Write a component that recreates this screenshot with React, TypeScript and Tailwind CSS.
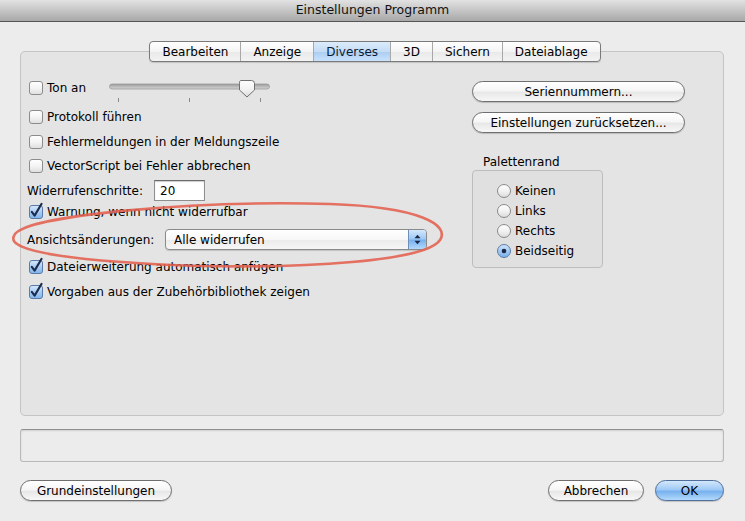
import type { ReactNode } from 'react'

function CheckBox({ checked = false }: { checked?: boolean }) {
  return (
    <svg width="14" height="14" viewBox="0 0 14 14" className="shrink-0 overflow-visible">
      <defs>
        <linearGradient id="cbOff" x1="0" y1="0" x2="0" y2="1">
          <stop offset="0" stopColor="#ffffff" />
          <stop offset="0.5" stopColor="#f4f4f4" />
          <stop offset="1" stopColor="#dedede" />
        </linearGradient>
        <linearGradient id="cbOn" x1="0" y1="0" x2="0" y2="1">
          <stop offset="0" stopColor="#d6e8fb" />
          <stop offset="0.5" stopColor="#a9cdf4" />
          <stop offset="1" stopColor="#7fb4ec" />
        </linearGradient>
      </defs>
      <rect x="0.5" y="0.5" width="13" height="13" rx="2.5" fill={checked ? 'url(#cbOn)' : 'url(#cbOff)'} stroke={checked ? '#5b7ba6' : '#8c8c8c'} />
      {checked && (
        <path d="M2.8 6.8 L5.6 10.6 L12.6 -1.2" fill="none" stroke="#1b2b4d" strokeWidth="2.1" strokeLinecap="round" strokeLinejoin="round" />
      )}
    </svg>
  )
}

function Radio({ checked = false }: { checked?: boolean }) {
  return (
    <svg width="14" height="14" viewBox="0 0 14 14" className="shrink-0">
      <defs>
        <linearGradient id="rbOff" x1="0" y1="0" x2="0" y2="1">
          <stop offset="0" stopColor="#ffffff" />
          <stop offset="0.5" stopColor="#f2f2f2" />
          <stop offset="1" stopColor="#dadada" />
        </linearGradient>
        <linearGradient id="rbOn" x1="0" y1="0" x2="0" y2="1">
          <stop offset="0" stopColor="#d4e7fb" />
          <stop offset="0.5" stopColor="#a3c9f3" />
          <stop offset="1" stopColor="#77aeea" />
        </linearGradient>
      </defs>
      <circle cx="7" cy="7" r="6.5" fill={checked ? 'url(#rbOn)' : 'url(#rbOff)'} stroke={checked ? '#5b7ba6' : '#8a8a8a'} />
      {checked && <circle cx="7" cy="7" r="2.3" fill="#1b2a48" />}
    </svg>
  )
}

function CheckRow({ label, checked, className = '' }: { label: string; checked?: boolean; className?: string }) {
  return (
    <div className={`flex items-center h-[20px] pl-[2px] gap-[4px] ${className}`}>
      <CheckBox checked={checked} />
      <span>{label}</span>
    </div>
  )
}

function AquaButton({ children, className = '', primary = false }: { children: ReactNode; className?: string; primary?: boolean }) {
  return (
    <div
      className={`h-[21px] rounded-full border flex items-center justify-center shadow-[0_1px_1px_rgba(0,0,0,0.18)] ${
        primary
          ? 'border-[#4e6f9c] bg-[linear-gradient(#d3e7fc,#9fcaf6_45%,#78b2ef_55%,#b3d9fc)]'
          : 'border-[#6f6f6f] bg-[linear-gradient(#ffffff,#f6f6f6_45%,#e8e8e8_55%,#f7f7f7)]'
      } ${className}`}
    >
      {children}
    </div>
  )
}

function Slider() {
  return (
    <svg width="164" height="26" viewBox="0 0 164 26" className="shrink-0 overflow-visible">
      <defs>
        <linearGradient id="trk" x1="0" y1="0" x2="0" y2="1">
          <stop offset="0" stopColor="#9c9c9c" />
          <stop offset="1" stopColor="#d6d6d6" />
        </linearGradient>
        <linearGradient id="knb" x1="0" y1="0" x2="0" y2="1">
          <stop offset="0" stopColor="#ffffff" />
          <stop offset="0.6" stopColor="#f0f0f0" />
          <stop offset="1" stopColor="#d8d8d8" />
        </linearGradient>
      </defs>
      <rect x="1.5" y="6" width="160" height="5" rx="2.5" fill="url(#trk)" stroke="#9a9a9a" strokeWidth="0.8" />
      <path d="M132.5 2.5 H143.5 Q146.5 2.5 146.5 5.5 V12 L139 19 L131.5 12 V5.5 Q131.5 2.5 132.5 2.5 Z" fill="url(#knb)" stroke="#707070" />
      <rect x="10" y="20" width="1" height="4" fill="#8a8a8a" />
      <rect x="81" y="20" width="1" height="4" fill="#8a8a8a" />
      <rect x="152" y="20" width="1" height="4" fill="#8a8a8a" />
    </svg>
  )
}

const tabs = ['Bearbeiten', 'Anzeige', 'Diverses', '3D', 'Sichern', 'Dateiablage']

export default function App() {
  return (
    <div className="relative w-[745px] h-[521px] overflow-hidden bg-[#ececec] text-[12px] text-black font-['DejaVu_Sans',sans-serif] flex flex-col">
      {/* title bar */}
      <div className="h-[22px] shrink-0 flex items-center justify-center border-b border-[#555555] bg-[linear-gradient(#e2e2e2,#a8a8a8)] text-[#111111] text-[12.5px]">
        Einstellungen Programm
      </div>

      <div className="flex flex-col pl-[20px] pr-[21px] pt-[19px]">
        {/* tab bar */}
        <div className="relative z-10 flex justify-center">
          <div className="flex h-[21px] rounded-[4px] border border-[#7a7a7a] bg-[linear-gradient(#ffffff,#f4f4f4_50%,#e9e9e9_51%,#f3f3f3)] shadow-[0_1px_1px_rgba(0,0,0,0.15)] overflow-hidden ml-[6px]">
            {tabs.map((t, i) => (
              <div
                key={t}
                className={`flex items-center px-[12px] ${i > 0 ? 'border-l border-[#a8a8a8]' : ''} ${
                  t === 'Diverses' ? 'bg-[linear-gradient(#dcebfb,#c4dcf6_50%,#abcdf2_51%,#c9e2fb)] text-[#0b1a33]' : ''
                }`}
              >
                {t}
              </div>
            ))}
          </div>
        </div>

        {/* group box */}
        <div className="-mt-[11px] h-[365px] rounded-[5px] border border-[#c4c4c4] bg-[#e4e4e4] flex">
          {/* left column */}
          <div className="w-[451px] pl-[6px] pt-[26px] flex flex-col">
            <div className="flex items-start h-[20px]">
              <div className="flex items-center h-[20px] pl-[2px] gap-[4px] w-[81px]">
                <CheckBox />
                <span>Ton an</span>
              </div>
              <Slider />
            </div>
            <CheckRow label="Protokoll führen" className="mt-[9px]" />
            <CheckRow label="Fehlermeldungen in der Meldungszeile" className="mt-[5px]" />
            <CheckRow label="VectorScript bei Fehler abbrechen" className="mt-[4px]" />
            <div className="flex items-center h-[21px] mt-[4px]">
              <span className="w-[127px]">Widerrufenschritte:</span>
              <div className="w-[51px] h-[21px] bg-white border border-[#8f8f8f] border-t-[#6a6a6a] shadow-[inset_0_1px_1px_rgba(0,0,0,0.2)] flex items-center pl-[5px]">
                20
              </div>
            </div>
            <CheckRow label="Warnung, wenn nicht widerrufbar" checked className="mt-[1px]" />
            <div className="flex items-center h-[21px] mt-[7px]">
              <span className="w-[138px]">Ansichtsänderungen:</span>
              <div className="w-[262px] h-[21px] rounded-[4px] border border-[#8a8a8a] bg-[linear-gradient(#ffffff,#f7f7f7_50%,#ebebeb_51%,#f6f6f6)] shadow-[0_1px_1px_rgba(0,0,0,0.15)] flex overflow-hidden">
                <div className="flex-1 flex items-center pl-[8px]">Alle widerrufen</div>
                <div className="w-[18px] border-l border-[#6f8fb8] bg-[linear-gradient(#d3e7fc,#9fcaf6_45%,#78b2ef_55%,#b3d9fc)] flex items-center justify-center">
                  <svg width="7" height="11" viewBox="0 0 7 11">
                    <path d="M0.5 4.2 L3.5 0.8 L6.5 4.2 Z" fill="#1c2740" />
                    <path d="M0.5 6.8 L3.5 10.2 L6.5 6.8 Z" fill="#1c2740" />
                  </svg>
                </div>
              </div>
            </div>
            <CheckRow label="Dateierweiterung automatisch anfügen" checked className="mt-[7px]" />
            <CheckRow label="Vorgaben aus der Zubehörbibliothek zeigen" checked className="mt-[5px]" />
          </div>

          {/* right column */}
          <div className="w-[213px] pt-[29px] flex flex-col">
            <AquaButton>Seriennummern...</AquaButton>
            <AquaButton className="mt-[10px]">Einstellungen zurücksetzen...</AquaButton>
            <div className="mt-[21px] pl-[11px] h-[15px] flex items-center">Palettenrand</div>
            <div className="mt-[1px] w-[131px] h-[98px] rounded-[4px] border border-[#bdbdbd] bg-[#e0e0e0] pt-[10px] pl-[24px] flex flex-col">
              {['Keinen', 'Links', 'Rechts', 'Beidseitig'].map((r) => (
                <div key={r} className="flex items-center h-[20px] gap-[4px]">
                  <Radio checked={r === 'Beidseitig'} />
                  <span>{r}</span>
                </div>
              ))}
            </div>
          </div>
        </div>

        {/* status field */}
        <div className="mt-[13px] h-[33px] rounded-[3px] border border-[#b9b9b9] border-t-[#8f8f8f] bg-[#ececec] shadow-[inset_0_1px_2px_rgba(0,0,0,0.12)]" />

        {/* bottom buttons */}
        <div className="mt-[18px] flex items-center">
          <AquaButton className="w-[152px]">Grundeinstellungen</AquaButton>
          <div className="flex-1" />
          <AquaButton className="w-[96px]">Abbrechen</AquaButton>
          <AquaButton primary className="w-[69px] ml-[11px]">OK</AquaButton>
        </div>
      </div>

      {/* hand-drawn highlight */}
      <svg className="absolute inset-0 pointer-events-none" width="745" height="521" viewBox="0 0 745 521">
        <path
          d="M14 236 C20 215, 200 200, 330 204 C420 207, 450 225, 440 240 C425 262, 300 268, 200 266 C80 262, 5 252, 14 236 Z"
          fill="none"
          stroke="#e2604f"
          strokeWidth="2.6"
          opacity="0.88"
        />
      </svg>
    </div>
  )
}
